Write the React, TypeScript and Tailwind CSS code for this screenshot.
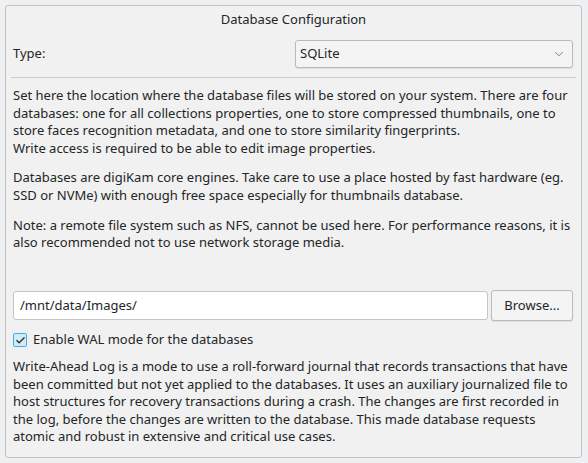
import { ChevronDown, Check } from "lucide-react";

export default function App() {
  return (
    <div
      className="w-[588px] h-[463px] bg-[#eff0f1] p-[5px] text-[#232627] text-[13px] leading-[17.6px]"
      style={{ fontFamily: '"Noto Sans", sans-serif' }}
    >
      <div className="h-[453px] w-[577px] rounded-[3px] border border-[#c2c3c4] bg-[#f1f1f1] px-[7px] flex flex-col">
        {/* Title */}
        <div className="text-center mt-[5px] h-[18px]">Database Configuration</div>

        {/* Type row */}
        <div className="mt-[11px] flex items-center justify-between">
          <span>Type:</span>
          <div className="mr-[1px] flex h-[28px] w-[278px] items-center justify-between rounded-[3px] border border-[#b9babb] bg-[#f4f4f4] pl-[4px] pr-[6px] shadow-[0_1px_1px_rgba(0,0,0,0.08)]">
            <span>SQLite</span>
            <ChevronDown size={14} strokeWidth={1.2} className="text-[#4d4d4d]" />
          </div>
        </div>

        {/* Separator */}
        <div className="mt-[9px] mx-[-2px] h-px bg-[#c9cacb]" />

        {/* Description */}
        <div className="mt-[9px] pr-[2px]">
          <p>
            Set here the location where the database files will be stored on your system. There are four
            databases: one for all collections properties, one to store compressed thumbnails, one to
            store faces recognition metadata, and one to store similarity fingerprints.
            <br />
            Write access is required to be able to edit image properties.
          </p>
          <p className="mt-[12px]">
            Databases are digiKam core engines. Take care to use a place hosted by fast hardware (eg.
            SSD or NVMe) with enough free space especially for thumbnails database.
          </p>
          <p className="mt-[12px]">
            Note: a remote file system such as NFS, cannot be used here. For performance reasons, it is
            also recommended not to use network storage media.
          </p>
        </div>

        <div className="flex-1" />

        {/* Path row */}
        <div className="flex items-center gap-[3px]">
          <div className="flex h-[29px] flex-1 items-center rounded-[3px] border border-[#c4c5c6] bg-white px-[6px]">
            /mnt/data/Images/
          </div>
          <div className="mr-[1px] flex h-[31px] w-[82px] items-center justify-center rounded-[3px] border border-[#b9babb] bg-[#f4f4f4] shadow-[0_1px_1px_rgba(0,0,0,0.08)]">
            Browse...
          </div>
        </div>

        {/* Checkbox */}
        <div className="mt-[10px] flex items-center gap-[6px]">
          <div className="flex h-[14px] w-[14px] items-center justify-center rounded-[2px] border border-[#3daee9] bg-[#d3ebf8]">
            <Check size={11} strokeWidth={2.6} className="text-[#232627]" />
          </div>
          <span>Enable WAL mode for the databases</span>
        </div>

        {/* WAL description */}
        <p className="mt-[9px] mb-[11px]">
          Write-Ahead Log is a mode to use a roll-forward journal that records transactions that have
          been committed but not yet applied to the databases. It uses an auxiliary journalized file to
          host structures for recovery transactions during a crash. The changes are first recorded in
          the log, before the changes are written to the database. This made database requests
          atomic and robust in extensive and critical use cases.
        </p>
      </div>
    </div>
  );
}
